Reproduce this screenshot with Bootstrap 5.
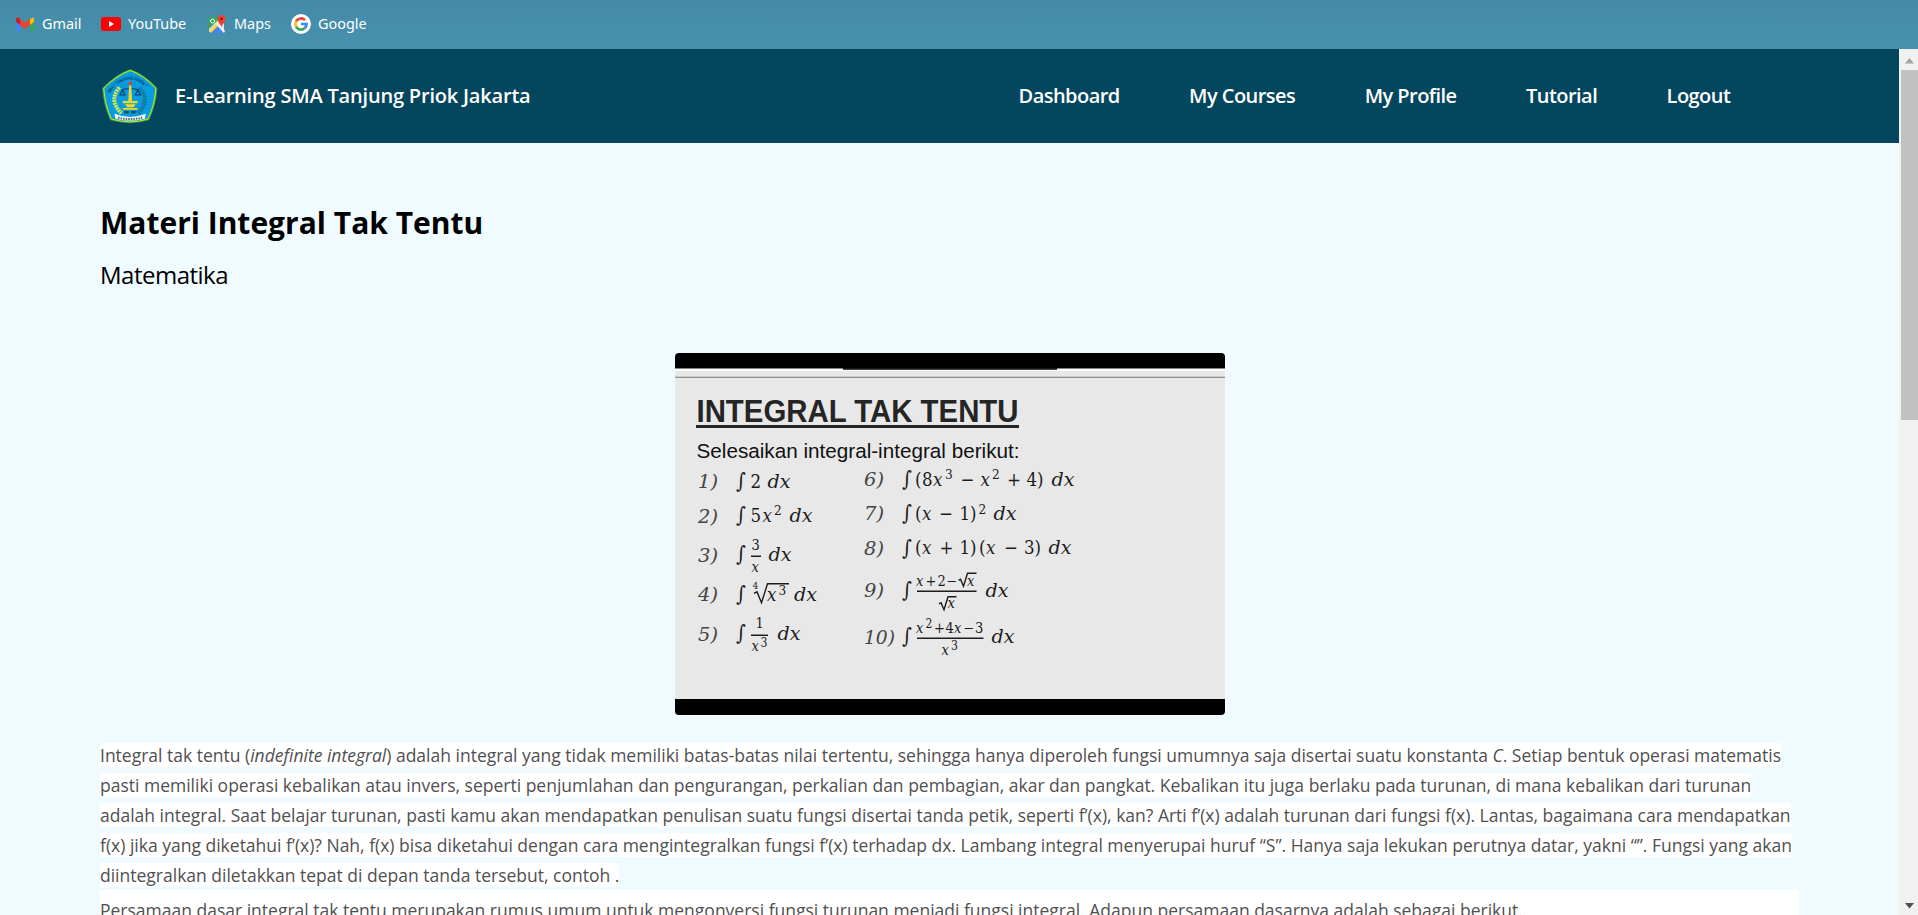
<!DOCTYPE html>
<html lang="id">
<head>
<meta charset="utf-8">
<meta name="viewport" content="width=device-width, initial-scale=1">
<title>Materi Integral Tak Tentu</title>
<link href="https://cdn.jsdelivr.net/npm/bootstrap@5.3.0/dist/css/bootstrap.min.css" rel="stylesheet">
<style>
body{font-family:"Open Sans",sans-serif;height:100vh;overflow:hidden;background:#f0fbff;color:#000}
.bookmarks{height:49px;background:linear-gradient(#438ba9,#4891ad);font-family:"Noto Sans",sans-serif;font-size:14.4px;padding:0 0 2px 15px;line-height:20px}
.bookmarks a{color:#fff;text-decoration:none;display:flex;align-items:center;gap:7px}
.bookmarks svg{width:20px;height:20px;flex:none}
.bm-gmail{width:86px}.bm-yt{width:106px}.bm-maps{width:84px}
.viewport{height:866px}
.main-nav{height:94px;background:#04465d;padding:0 134px 0 100px}
.brand{font-size:20px;font-weight:600;letter-spacing:-.19px;color:#fff;gap:10px}
.brand svg{margin:3px 0 0 -1px}
.main-nav .nav-link{font-size:20px;font-weight:600;letter-spacing:-.54px;color:#fff;padding:0 34.7px;line-height:30px}
.materi{padding:60px 100px 0}
h1{font-size:30px;font-weight:700;line-height:40px;margin:0 0 14px}
.mapel{font-size:24px;letter-spacing:-.5px;line-height:36px;margin:0 0 60px}
.figure-box{width:550px;height:362px;border-radius:4px;display:block;margin:0 auto 25px}
.teks{color:#505050;font-size:17.5px;line-height:30px;margin:0;white-space:nowrap}
.teks span{background:#fff}
.blok{background:#fff;padding-top:5px;height:60px}
.scroller{width:19px;background:#f1f1f1}
.thumb{width:17px;height:350px;background:#c1c1c1}
.soal{font-family:"DejaVu Serif Condensed","DejaVu Serif",serif;font-stretch:condensed;font-size:18.5px;fill:#1c1c1c}
.soal .it{font-style:italic}
.soal .nomor{font-style:italic;fill:#444;font-size:19px}
.soal .tanda{font-size:21px}
.soal .kecil{font-size:14.5px}
.soal .pangkat{font-size:13.5px}
.soal path{fill:none;stroke:#1c1c1c;stroke-width:1.4}
</style>
</head>
<body>
<div class="bookmarks d-flex align-items-center">
<a class="bm-gmail" href="#"><svg viewBox="0 0 20 20"><path d="M1 6h4v11H2.500Q1 17 1 15.500z" fill="#4285f4"/><path d="M15 6h4v9.500q0 1.500-1.500 1.500H15z" fill="#34a853"/><path d="M15 5.500q4-4 4 0V8l-4 3z" fill="#fbbc04"/><path d="M1 5.500Q1 3 4 4l6 4.500L15 5v6l-5 4-5-4z" fill="#ea4335"/><path d="M1 5.500Q1 3 3.500 3.800L5 5v6L1 8z" fill="#c5221f"/></svg>Gmail</a>
<a class="bm-yt" href="#"><svg viewBox="0 0 20 20"><rect y="3" width="20" height="14" rx="3" fill="#f00"/><path d="M8 7l5 3-5 3z" fill="#fff"/></svg><span>YouTube</span></a>
<a class="bm-maps" href="#"><svg viewBox="0 0 20 20"><path d="M2 3h15v15H2z" fill="#dfe3e8"/><path d="M2 3h12L2 15z" fill="#34a853"/><path d="M3 19l7-8 7 8z" fill="#4285f4"/><path d="M2 17L14 4l2 3L4 19z" fill="#fbd04c"/><path d="M9 10l2-2 7 9-1 2z" fill="#f5f5f5"/><circle cx="5.500" cy="7" r="2" fill="none" stroke="#fff"/><path d="M14.500 14c0-4-4-5-4-9a4 4 0 0 1 8 0c0 4-4 5-4 9z" fill="#ea4335"/><circle cx="14.500" cy="5" r="1.400" fill="#8c1d18"/></svg><span>Maps</span></a>
<a href="#"><svg viewBox="0 0 20 20"><circle cx="10" cy="10" r="10" fill="#fff"/><g fill="none" stroke-width="2.700"><path d="M5.100 7.300A5.600 5.600 0 0 1 14 6.100" stroke="#ea4335"/><path d="M5.100 12.700a5.600 5.600 0 0 1 0-5.400" stroke="#fbbc05"/><path d="M13.600 14.300a5.600 5.600 0 0 1-8.500-1.600" stroke="#34a853"/><path d="M10 10h5.600a5.600 5.600 0 0 1-2 4.300" stroke="#4285f4"/></g></svg><span>Google</span></a>
</div>
<div class="viewport d-flex">
<div class="flex-grow-1 overflow-hidden">
<nav class="main-nav d-flex align-items-center justify-content-between">
<a class="brand d-flex align-items-center text-decoration-none" href="#">
<svg width="66" height="67" viewBox="15 0 180 195" preserveAspectRatio="none">
<path d="M100 18Q138 32 171 71Q168 120 149 161Q100 178 48 161Q30 120 27 71Q62 32 100 18z" fill="#079be0" stroke="#35a853" stroke-width="6"/>
<path d="M100 19Q138 33 170 71Q167 120 148 160Q100 177 49 160Q31 120 28 71Q63 33 100 19z" fill="none" stroke="#d8ee26" stroke-width="2.500"/>
<path id="lengkung" d="M44 86Q100 4 156 86" fill="none"/>
<text font-family="Liberation Sans" font-weight="700" font-size="13" fill="#053b5b"><textPath href="#lengkung" textLength="122" lengthAdjust="spacingAndGlyphs">SMA " TANJUNG PRIOK "</textPath></text>
<path d="M71 68Q40 105 76 143" fill="none" stroke="#d5e64c" stroke-width="11" stroke-dasharray="6 2"/>
<path d="M125 70Q155 105 123 143" fill="none" stroke="#176f8c" stroke-width="12" stroke-dasharray="4 3"/>
<path d="M100 56v18M79 75q20-8 42 0M79 75l-7 15h14zM121 75l-7 15h14z" fill="none" stroke="#073e67" stroke-width="3"/>
<path d="M97 62h6l2 46h15v6H80v-6h15zM86 117h29l-6 9H92zM80 128h40v5H80z" fill="#f5da22"/>
<circle cx="100" cy="56" r="5" fill="#e83b2e"/>
<path d="M84 137h12v7H84zM103 137h12v7h-12z" fill="#244f58"/>
<path d="M57 145q43 18 86 0l-3 14q-40 12-80 0z" fill="#f7faf5"/>
<path d="M67 156q33 9 66 0" fill="none" stroke="#43656b" stroke-width="6" stroke-dasharray="4 3"/>
</svg>
<span>E-Learning SMA Tanjung Priok Jakarta</span></a>
<div class="nav flex-nowrap"><a class="nav-link" href="#">Dashboard</a><a class="nav-link" href="#">My Courses</a><a class="nav-link" href="#">My Profile</a><a class="nav-link" href="#">Tutorial</a><a class="nav-link" href="#">Logout</a></div>
</nav>
<main class="materi">
<h1>Materi Integral Tak Tentu</h1>
<p class="mapel">Matematika</p>
<svg class="figure-box" viewBox="675 353 550 362">
<rect x="675" y="353" width="550" height="362" fill="#e8e8e8"/>
<rect x="675" y="368" width="550" height="3" fill="#fff"/>
<rect x="675" y="353" width="550" height="15.500"/>
<rect x="843" y="368" width="214" height="1.800" fill="#151519"/>
<rect x="675" y="376.700" width="550" height="1.200" fill="#888"/>
<rect x="675" y="699" width="550" height="16"/>
<text x="696.500" y="422" font-family="Liberation Sans" font-weight="700" font-size="30.500" fill="#252525" textLength="322" lengthAdjust="spacingAndGlyphs">INTEGRAL TAK TENTU</text>
<rect x="696" y="425" width="323" height="3" fill="#252525"/>
<text x="696.500" y="457.500" font-family="Liberation Sans" font-size="20.500" fill="#111" textLength="323" lengthAdjust="spacingAndGlyphs">Selesaikan integral-integral berikut:</text>
<g class="soal" transform="translate(0 -.7)">
<g class="nomor"><text x="698" y="489" textLength="20" lengthAdjust="spacingAndGlyphs">1)</text><text x="698" y="523.500" textLength="20" lengthAdjust="spacingAndGlyphs">2)</text><text x="698" y="562.500" textLength="20" lengthAdjust="spacingAndGlyphs">3)</text><text x="698" y="602" textLength="20" lengthAdjust="spacingAndGlyphs">4)</text><text x="698" y="641.500" textLength="20" lengthAdjust="spacingAndGlyphs">5)</text>
<text x="864" y="486.500" textLength="20" lengthAdjust="spacingAndGlyphs">6)</text><text x="864" y="521" textLength="20" lengthAdjust="spacingAndGlyphs">7)</text><text x="864" y="555.500" textLength="20" lengthAdjust="spacingAndGlyphs">8)</text><text x="864" y="598" textLength="20" lengthAdjust="spacingAndGlyphs">9)</text><text x="864" y="644.500" textLength="31" lengthAdjust="spacingAndGlyphs">10)</text></g>
<g class="tanda"><text x="736" y="489">∫</text><text x="736" y="523">∫</text><text x="736" y="562">∫</text><text x="736" y="602">∫</text><text x="736" y="641">∫</text><text x="902" y="486.500">∫</text><text x="902" y="521">∫</text><text x="902" y="555.500">∫</text><text x="902" y="597.500">∫</text><text x="902" y="644">∫</text></g>
<g class="it"><text x="767.500" y="488.700" textLength="23" lengthAdjust="spacingAndGlyphs">dx</text><text x="789.500" y="523" textLength="23" lengthAdjust="spacingAndGlyphs">dx</text><text x="768.500" y="561.700" textLength="23" lengthAdjust="spacingAndGlyphs">dx</text><text x="794" y="602" textLength="23" lengthAdjust="spacingAndGlyphs">dx</text><text x="777.500" y="641" textLength="23" lengthAdjust="spacingAndGlyphs">dx</text><text x="1051.500" y="486.300" textLength="23" lengthAdjust="spacingAndGlyphs">dx</text><text x="993.500" y="520.700" textLength="23" lengthAdjust="spacingAndGlyphs">dx</text><text x="1048.500" y="555" textLength="23" lengthAdjust="spacingAndGlyphs">dx</text><text x="985.500" y="597.500" textLength="23" lengthAdjust="spacingAndGlyphs">dx</text><text x="991.500" y="644" textLength="23" lengthAdjust="spacingAndGlyphs">dx</text></g>
<text x="750.500" y="488.700">2</text>
<text x="750.500" y="523">5<tspan class="it" x="762.500">x</tspan><tspan class="pangkat" x="774" y="516">2</tspan></text>
<text class="kecil" x="751.500" y="550.500">3<tspan class="it" x="751.500" y="572.500">x</tspan></text><path d="M751 557h10"/>
<text x="752.500" y="590" font-size="10">4</text><path d="M754 594l3-1.500 4.500 11 6-19h21.500"/><text class="it" x="767" y="602">x</text><text class="pangkat" x="778.500" y="595.500">3</text>
<text class="kecil" x="755.500" y="628.500">1<tspan class="it" x="751.500" y="652">x</tspan><tspan font-size="12" x="760.500" y="648">3</tspan></text><path d="M751 636h17"/>
<text y="486.300"><tspan x="915">(</tspan><tspan x="922">8</tspan><tspan class="it" x="933">x</tspan><tspan class="pangkat" x="945" y="480">3</tspan><tspan x="960.500" y="486.300">−</tspan><tspan class="it" x="980.500">x</tspan><tspan class="pangkat" x="992" y="480">2</tspan><tspan x="1007" y="486.300">+</tspan><tspan x="1026.500">4)</tspan></text>
<text y="520.700"><tspan x="915">(</tspan><tspan class="it" x="922">x</tspan><tspan x="939">−</tspan><tspan x="959.500">1)</tspan><tspan class="pangkat" x="978.500" y="514.500">2</tspan></text>
<text y="555"><tspan x="915">(</tspan><tspan class="it" x="922">x</tspan><tspan x="939.500">+</tspan><tspan x="959.500">1)</tspan><tspan x="979">(</tspan><tspan class="it" x="986">x</tspan><tspan x="1004">−</tspan><tspan x="1024">3)</tspan></text>
<text class="kecil" y="586.500"><tspan class="it" x="916">x</tspan><tspan x="925.500">+</tspan><tspan x="937.500">2</tspan><tspan x="946.500">−</tspan><tspan class="it" x="967">x</tspan><tspan class="it" x="947.500" y="609">x</tspan></text>
<path d="M917 592h59.500M958.500 581l2-1 3 7 4-13h9M939 604.500l2-1 3 7 4-13h8.500M917 639h66.500"/>
<text class="kecil" y="633.500"><tspan class="it" x="916">x</tspan><tspan x="925.500" y="629" font-size="12">2</tspan><tspan x="934" y="633.500">+</tspan><tspan x="945.500">4</tspan><tspan class="it" x="954">x</tspan><tspan x="963.500">−</tspan><tspan x="975">3</tspan><tspan class="it" x="941.500" y="655.500">x</tspan><tspan x="951" y="651" font-size="12">3</tspan></text>
</g>
</svg>
<p class="teks"><span>Integral tak tentu (<i>indefinite integral</i>) adalah integral yang tidak memiliki batas-batas nilai tertentu, sehingga hanya diperoleh fungsi umumnya saja disertai suatu konstanta <i>C</i>. Setiap bentuk operasi matematis<br>
pasti memiliki operasi kebalikan atau invers, seperti penjumlahan dan pengurangan, perkalian dan pembagian, akar dan pangkat. Kebalikan itu juga berlaku pada turunan, di mana kebalikan dari turunan<br>
adalah integral. Saat belajar turunan, pasti kamu akan mendapatkan penulisan suatu fungsi disertai tanda petik, seperti f’(x), kan? Arti f’(x) adalah turunan dari fungsi f(x). Lantas, bagaimana cara mendapatkan<br>
f(x) jika yang diketahui f’(x)? Nah, f(x) bisa diketahui dengan cara mengintegralkan fungsi f’(x) terhadap dx. Lambang integral menyerupai huruf “S”. Hanya saja lekukan perutnya datar, yakni “”. Fungsi yang akan<br>
diintegralkan diletakkan tepat di depan tanda tersebut, contoh .</span></p>
<p class="teks blok">Persamaan dasar integral tak tentu merupakan rumus umum untuk mengonversi fungsi turunan menjadi fungsi integral. Adapun persamaan dasarnya adalah sebagai berikut.</p>
</main>
</div>
<div class="scroller d-flex flex-column align-items-end flex-shrink-0">
<svg width="17" height="21"><path d="M4 14.500L8.500 9l4.500 5.500z" fill="#a3a3a3"/></svg>
<div class="thumb"></div>
<svg class="mt-auto" width="17" height="17"><path d="M4 5h9l-4.500 5.500z" fill="#505050"/></svg>
</div>
</div>
<script src="https://cdn.jsdelivr.net/npm/bootstrap@5.3.0/dist/js/bootstrap.bundle.min.js"></script>
</body>
</html>
